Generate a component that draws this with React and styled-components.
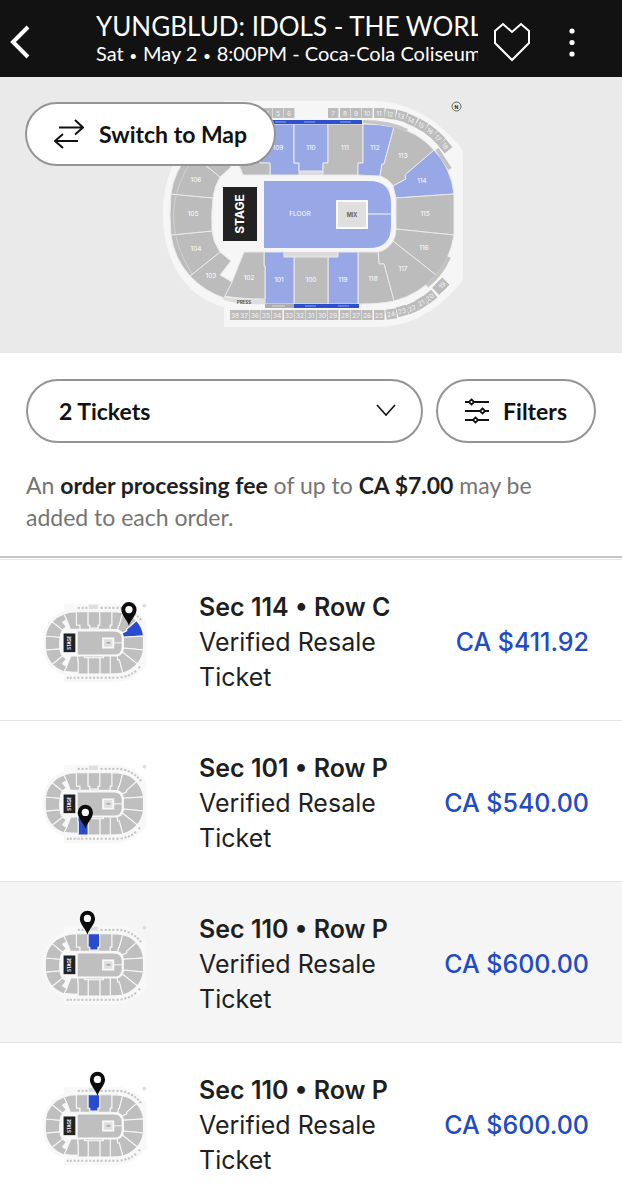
import React from 'react';
import styled, { createGlobalStyle } from 'styled-components';

const GlobalStyle = createGlobalStyle`
  * {
    box-sizing: border-box;
  }

  html {
    scrollbar-width: none;
  }

  body {
    margin: 0;
    background: #fff;
    color: #1f1f1f;
    font-family: Lato, 'Liberation Sans', sans-serif;
  }

  button, select {
    font-family: inherit;
  }
`;

const Header = styled.header`
  display: flex;
  align-items: center;
  height: 77px;
  padding: 0 25px 0 0;
  background: #121212;
  color: #fff;
`;

const IconButton = styled.button`
  display: flex;
  align-items: center;
  justify-content: ${props => props.$align || 'center'};
  flex: none;
  width: ${props => props.$width}px;
  height: 48px;
  margin-top: 6px;
  padding: 0;
  border: 0;
  background: none;
  color: inherit;
`;

const EventInfo = styled.div`
  flex: 1;
  min-width: 0;
  overflow: hidden;
  white-space: nowrap;
`;

const EventTitle = styled.h1`
  margin: 0;
  font-size: 26px;
  font-weight: 400;
  line-height: 30px;
`;

const EventDetails = styled.p`
  margin: 0;
  font-size: 20px;
  line-height: 24px;
`;

const Dot = styled.span`
  font-family: Inter, sans-serif;
  font-size: 16px;
`;

const MapArea = styled.section`
  position: relative;
  display: flex;
  justify-content: center;
  padding: 19px 0 21px;
  background: #eaeaea;
`;

const ArenaSvg = styled.svg`
  display: block;
  flex: none;
  width: ${props => props.$width}px;
  aspect-ratio: 318 / 236;
  overflow: visible;
  font-family: Inter, sans-serif;
`;

const PillButton = styled.button`
  display: flex;
  align-items: center;
  justify-content: center;
  gap: ${props => props.$gap}px;
  height: 64px;
  padding: 0 27px;
  border: 2px solid #949494;
  border-radius: 32px;
  background: #fff;
  color: #121212;
  font-size: 23px;
  font-weight: 700;
  white-space: nowrap;
`;

const SwitchButton = styled(PillButton)`
  position: absolute;
  top: 25px;
  left: 25px;
`;

const Controls = styled.div`
  display: flex;
  gap: 13px;
  padding: 26px 26px 0;
`;

const SelectWrap = styled.label`
  display: grid;
  flex: 1;
  align-items: center;

  > * {
    grid-area: 1 / 1;
  }

  svg {
    justify-self: end;
    margin-right: 27px;
    pointer-events: none;
  }
`;

const TicketSelect = styled.select`
  width: 100%;
  height: 64px;
  padding: 0 60px 0 31px;
  border: 2px solid #949494;
  border-radius: 32px;
  appearance: none;
  background: #fff;
  color: #121212;
  font-size: 23px;
  font-weight: 700;
`;

const FeeNote = styled.p`
  margin: 0;
  padding: 26px 26px 23px;
  border-bottom: 2px solid #c6c6c6;
  color: #757575;
  font-size: 23px;
  line-height: 32px;

  strong {
    color: #1f1f1f;
  }
`;

const TicketList = styled.ul`
  margin: 1px 0 0;
  padding: 0;
  border-top: 1px solid #e6e6e6;
  list-style: none;
  font-family: Inter, sans-serif;
`;

const TicketRow = styled.a`
  display: flex;
  align-items: center;
  padding: 30px 33px 25px 39px;
  border-bottom: 1px solid #e4e4e4;
  background: ${props => (props.$active ? '#f5f5f5' : '#fff')};
  color: #1f1f1f;
  text-decoration: none;
`;

const TicketText = styled.div`
  flex: 1;
  min-width: 0;
  margin-left: 50px;
  font-size: 25px;
  line-height: 35px;
`;

const SeatName = styled.strong`
  display: block;
  font-weight: 600;
`;

const TicketType = styled.span`
  display: block;
  max-width: 210px;
`;

const Price = styled.span`
  color: #1f4bc6;
  font-size: 25px;
  font-weight: 500;
  line-height: 35px;
  white-space: nowrap;
`;

const SECTIONS = [
  { id: '109', d: 'M260 124H294V163H299V175H270V163H260Z', x: 278, y: 148, open: true },
  { id: '110', d: 'M294 124H328V163H323V171H299V163H294Z', x: 311, y: 148, open: true },
  { id: '111', d: 'M328 124H363V163H358V175H323V163H328Z', x: 345, y: 148 },
  { id: '112', d: 'M363 124Q380 124 394 127L384 164H382L380 176L358 175V163H363Z', x: 375, y: 148, open: true },
  { id: '113', d: 'M394 127Q417 131 434 150L405 175L406 179L393 186Q389 179 380 176L382 164H384Z', x: 403, y: 156 },
  { id: '114', d: 'M434 150Q451 168 454 194L396 198L393 186L406 179L405 175Z', x: 422, y: 181, open: true },
  { id: '115', d: 'M454 194V235L396 229V198Z', x: 425, y: 214 },
  { id: '116', d: 'M454 235Q450 259 436 275L393 241Q396 236 396 229Z', x: 424, y: 248 },
  { id: '117', d: 'M436 275Q420 294 394 301L384 264H379L378 252Q388 250 393 241Z', x: 403, y: 269 },
  { id: '118', d: 'M358 252H378L379 264H384L394 301Q380 304 358 304Z', x: 373, y: 279 },
  { id: '119', d: 'M338 252H358V304H328V257H338Z', x: 343, y: 280, open: true },
  { id: '100', d: 'M294 257H328V304H294Z', x: 311, y: 280 },
  { id: '101', d: 'M264 252H284V257H294V304H265V266H264Z', x: 279, y: 280, open: true },
  { id: '102', d: 'M244 252H264V266H265V299Q240 299 224 296L232 282Z', x: 249, y: 278 },
  { id: '103', d: 'M220 252L231 261L220 275L232 282L224 298Q204 291 190 276Z', x: 211, y: 276 },
  { id: '104', d: 'M212 231Q213 242 220 252L190 276Q174 258 171 235Z', x: 196, y: 249 },
  { id: '105', d: 'M213 198Q211 214 212 231L171 235Q169 214 171 194Z', x: 193, y: 214 },
  { id: '106', d: 'M220 177Q214 187 213 198L171 194Q174 171 190 153Z', x: 196, y: 180 },
  { id: '107', d: 'M190 153Q204 138 224 131L232 147L220 154L231 167L220 177Z', x: 210, y: 152 },
  { id: '108', d: 'M224 131Q240 124 260 124V163H270V175H243L232 147Z', x: 249, y: 148 },
];

const SUITES = [
  [4, 267, 113], [5, 278, 113], [6, 289, 113], [7, 333, 113], [8, 345, 113], [9, 356, 113],
  [10, 367, 113], [11, 379, 113], [12, 390, 114, 8], [13, 401, 116, 16], [14, 411, 120, 24],
  [15, 421, 125, 31], [16, 430, 131, 38], [17, 438, 138, 45], [18, 445, 146, 50],
  [38, 235, 315], [37, 244, 315], [36, 255, 315], [35, 266, 315], [34, 277, 315], [33, 289, 315],
  [32, 300, 315], [31, 311, 315], [30, 322, 315], [29, 333, 315], [28, 345, 315], [27, 356, 315],
  [26, 367, 315], [25, 379, 315], [24, 391, 314, -8], [23, 402, 311, -16], [22, 412, 308, -24],
  [21, 421, 303, -32], [20, 430, 297, -38], [19, 442, 285, -45],
];

const ArenaMap = ({ width, highlight, pin }) => {
  const small = Boolean(highlight);
  const fillFor = section => {
    if (small) return section.id === highlight ? '#2a4bd0' : '#bfbfbf';
    return section.open ? '#98a8e7' : '#bcbcbc';
  };

  return (
    <ArenaSvg $width={width} viewBox="152 96 318 236" aria-hidden="true">
      <path
        d="M224 101H374C405 101 433 116 457 143Q463 149 463 156V277Q463 281 459 285C432 316 405 327 374 327H224V307C188 298 163 264 163 214C163 165 188 131 224 121Z"
        fill={small ? '#f8f8f8' : '#f6f6f6'}
      />
      <path d="M299 171H323V175H299ZM284 252H338V257H284Z" fill="#dcdcdc" />
      {small && <rect x="296" y="104" width="26" height="12" fill="#dedede" />}
      {SECTIONS.map(section => (
        <path
          key={section.id}
          d={section.d}
          fill={fillFor(section)}
          stroke={small ? '#f8f8f8' : '#e9e9e9'}
          strokeWidth={small ? 3 : 1}
        />
      ))}
      {SUITES.map(([label, x, y, angle = 0]) => (
        <g key={label} transform={`translate(${x} ${y}) rotate(${angle})`}>
          {small ? (
            <rect x="-3" y="-3" width="6" height="6" fill="#c4c4c4" />
          ) : (
            <>
              <rect x="-5" y="-5" width="10.5" height="10" fill="#bcbcbc" />
              {label === 19 && <rect x="-9" y="-5" width="14" height="10" fill="#bcbcbc" />}
              <text y="2.5" fontSize="6.5" fill="#f4f4f4" textAnchor="middle">{label}</text>
            </>
          )}
        </g>
      ))}
      {!small && (
        <>
          <path d="M264 120H362V124H264ZM294 304H359V308H294Z" fill="#2d50cc" />
          <path d="M275 122H286M304 122H315M340 122H351M305 306H316M338 306H349" stroke="#8fa2e6" />
          <path d="M265 304H294V308H265Z" fill="#acacac" />
          <path d="M272 306H285M372 123L385 124M398 128L405 130" stroke="#dadada" />
          <path d="M363 120Q390 120 408 129L406 132Q388 124 363 123Z" fill="#c6c6c6" />
          <path d="M437 149L450 169M449 257Q441 275 427 286" fill="none" stroke="#c2c2c2" strokeWidth="4" />
          <path d="M224 297Q240 300 265 299V304Q240 305 223 300Z" fill="#dedede" />
          <text x="244" y="304" fontSize="4.5" fontWeight="700" fill="#555" textAnchor="middle">PRESS</text>
          <path d="M194 157Q154 214 192 274" fill="none" stroke="#d8d8d8" strokeWidth=".8" />
          {SECTIONS.map(section => (
            <text key={section.id} x={section.x} y={section.y + 2} fontSize="6.5" fill="#fff" textAnchor="middle">
              {section.id}
            </text>
          ))}
        </>
      )}
      <path
        d="M264 181H369Q391 181 391 203V226Q391 248 369 248H264Z"
        fill={small ? '#bfbfbf' : '#98a8e7'}
      />
      <path d="M366 214H391" stroke="#f6f6f6" strokeWidth={small ? 3 : 1} />
      <rect x="337" y="201" width="30" height="27" fill="#dfdfdf" stroke="#fafafa" strokeWidth={small ? 5 : 2} />
      <rect x="223" y="187" width="34" height="54" fill="#222" />
      <text transform="translate(244 214) rotate(-90)" fontSize="12" fontWeight="700" fill="#fff" textAnchor="middle">
        STAGE
      </text>
      {small ? (
        <path d="M347 214H358" stroke="#aaa" strokeWidth="5" />
      ) : (
        <>
          <text x="300" y="216" fontSize="6.5" fill="#fff" textAnchor="middle">FLOOR</text>
          <text x="352" y="217" fontSize="5.5" fontWeight="600" fill="#555" textAnchor="middle">MIX</text>
        </>
      )}
      <circle cx="456.5" cy="106.5" r="4.5" fill={small ? '#ddd' : 'none'} stroke={small ? '#ccc' : '#444'} strokeWidth=".8" />
      {!small && (
        <text x="456.5" y="108.5" fontSize="5" fontWeight="700" fill="#222" textAnchor="middle">N</text>
      )}
      {pin && (
        <g transform={`translate(${pin[0]} ${pin[1]})`}>
          <path
            d="M0 2C-4 -14 -22 -28 -22 -45A22 22 0 0 1 22 -45C22 -28 4 -14 0 2Z"
            fill="#0c0c0c"
          />
          <circle cy="-45" r="10.5" fill="#fff" />
        </g>
      )}
    </ArenaSvg>
  );
};

const BackIcon = () => (
  <svg width="32" height="36" viewBox="0 0 32 36" fill="none" aria-hidden="true">
    <path d="M28 3L13 18L28 33" stroke="#fff" strokeWidth="4" />
  </svg>
);

const HeartIcon = () => (
  <svg width="38" height="42" viewBox="0 0 38 42" fill="none" aria-hidden="true">
    <path d="M2 10L10 3L19 11L28 3L36 10V22L19 39L2 22Z" stroke="#fff" strokeWidth="2" />
  </svg>
);

const MoreIcon = () => (
  <svg width="8" height="32" viewBox="0 0 8 32" fill="#fff" aria-hidden="true">
    <circle cx="4" cy="5" r="2.6" />
    <circle cx="4" cy="16.5" r="2.6" />
    <circle cx="4" cy="28" r="2.6" />
  </svg>
);

const SwapIcon = () => (
  <svg width="30" height="30" viewBox="0 0 30 30" fill="none" stroke="#121212" strokeWidth="2" aria-hidden="true">
    <path d="M5 8.5H29M21 1L29 8.5L21 15.5M24 22H1M9 15L1 22L9 29" />
  </svg>
);

const ChevronIcon = () => (
  <svg width="20" height="14" viewBox="0 0 20 14" fill="none" aria-hidden="true">
    <path d="M1 1L10 11L19 1" stroke="#121212" strokeWidth="1.6" />
  </svg>
);

const FiltersIcon = () => (
  <svg width="25" height="26" viewBox="0 0 25 26" fill="none" stroke="#121212" strokeWidth="1.8" aria-hidden="true">
    <path d="M0 4H4M9 4H24M0 13H15M20 13H24M0 22H8M13 22H24" />
    <path d="M6.5 1.4L9.1 4L6.5 6.6L3.9 4ZM17.5 10.4L20.1 13L17.5 15.6L14.9 13ZM10.5 19.4L13.1 22L10.5 24.6L7.9 22Z" />
  </svg>
);

const TICKETS = [
  { id: 1, section: '114', row: 'C', price: '411.92', pin: [412, 163] },
  { id: 2, section: '101', row: 'P', price: '540.00', pin: [286, 284] },
  { id: 3, section: '110', row: 'P', price: '600.00', pin: [292, 125], active: true },
  { id: 4, section: '110', row: 'P', price: '600.00', pin: [321, 125] },
];

const App = () => (
  <>
    <GlobalStyle />
    <Header>
      <IconButton $width={96} $align="flex-start" aria-label="Back"><BackIcon /></IconButton>
      <EventInfo>
        <EventTitle>YUNGBLUD: IDOLS - THE WORLD TOUR</EventTitle>
        <EventDetails>Sat <Dot>•</Dot> May 2 <Dot>•</Dot> 8:00PM - Coca-Cola Coliseum</EventDetails>
      </EventInfo>
      <IconButton $width={68} aria-label="Save event"><HeartIcon /></IconButton>
      <IconButton $width={51} aria-label="More options"><MoreIcon /></IconButton>
    </Header>
    <main>
      <MapArea>
        <ArenaMap width={318} />
        <SwitchButton $gap={15}><SwapIcon />Switch to Map</SwitchButton>
      </MapArea>
      <Controls>
        <SelectWrap>
          <TicketSelect aria-label="Number of tickets" defaultValue="2">
            <option value="1">1 Ticket</option>
            <option value="2">2 Tickets</option>
            <option value="3">3 Tickets</option>
            <option value="4">4 Tickets</option>
          </TicketSelect>
          <ChevronIcon />
        </SelectWrap>
        <PillButton $gap={13}><FiltersIcon />Filters</PillButton>
      </Controls>
      <FeeNote>
        An <strong>order processing fee</strong> of up to <strong>CA $7.00</strong> may be added to each order.
      </FeeNote>
      <TicketList>
        {TICKETS.map(ticket => (
          <li key={ticket.id}>
            <TicketRow href={`#ticket-${ticket.id}`} $active={ticket.active}>
              <ArenaMap width={110} highlight={ticket.section} pin={ticket.pin} />
              <TicketText>
                <SeatName>Sec {ticket.section} • Row {ticket.row}</SeatName>
                <TicketType>Verified Resale Ticket</TicketType>
              </TicketText>
              <Price>CA ${ticket.price}</Price>
            </TicketRow>
          </li>
        ))}
      </TicketList>
    </main>
  </>
);

export default App;
